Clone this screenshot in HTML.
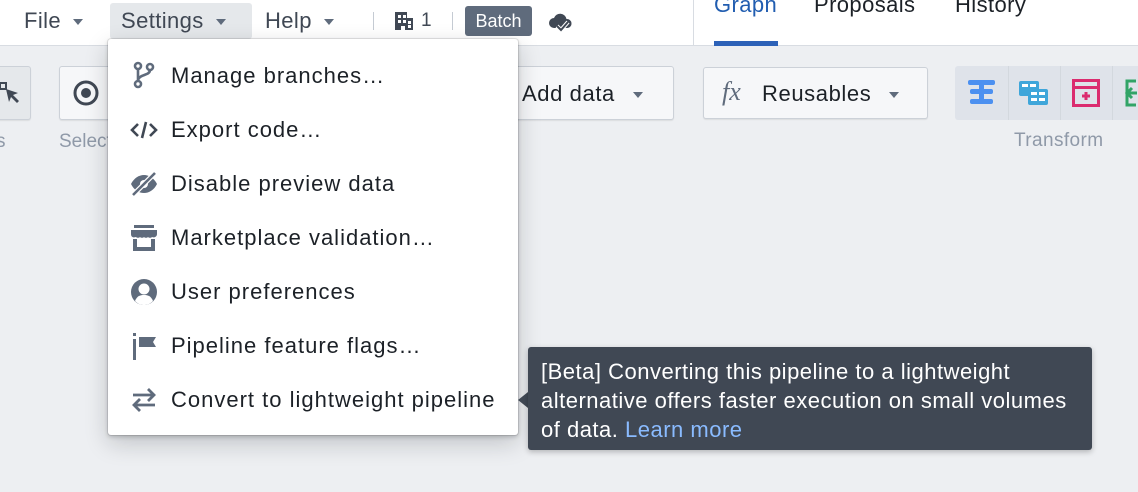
<!DOCTYPE html>
<html><head><meta charset="utf-8"><style>
*{box-sizing:border-box;margin:0;padding:0}
body{width:1138px;height:492px;overflow:hidden;background:#edeff2;font-family:"Liberation Sans",sans-serif;color:#1c2127;position:relative}
.top{position:absolute;left:0;top:0;width:1138px;height:46px;background:#fff;border-bottom:1px solid #d8dce2}
.ab{position:absolute}
.mi{position:absolute;font-size:22px;letter-spacing:.4px;color:#404854;top:8px}
.caret{display:inline-block;width:0;height:0;border-left:5px solid transparent;border-right:5px solid transparent;border-top:6px solid #5f6b7c;vertical-align:middle;margin-left:12px}
.btn{position:absolute;background:#f6f7f9;border:1px solid #ccd1d8;border-radius:3px;box-shadow:0 1px 1px rgba(0,0,0,.08)}
.menu{position:absolute;left:108px;top:39px;width:410px;height:396px;background:#fff;border-radius:3px;box-shadow:0 0 0 1px rgba(17,20,24,.1),0 2px 4px rgba(17,20,24,.2),0 8px 24px rgba(17,20,24,.2)}
.it{position:absolute;left:63px;font-size:22px;letter-spacing:1px;color:#1c2127;white-space:nowrap}
.ic{position:absolute;left:22px;width:28px;height:28px}
.tip{position:absolute;left:528px;top:347px;width:564px;height:103px;background:#404854;border-radius:3px;color:#fff;font-size:22px;letter-spacing:.5px;line-height:29px;padding:10px 13px;white-space:nowrap;box-shadow:0 2px 6px rgba(0,0,0,.25)}
</style></head><body>
<div class="top"></div>
<div class="mi" style="left:24px">File<span class="caret"></span></div>
<div class="ab" style="left:110px;top:3px;width:142px;height:36px;background:#e5e8eb;border-radius:3px"></div>
<div class="mi" style="left:121px">Settings<span class="caret"></span></div>
<div class="mi" style="left:265px">Help<span class="caret"></span></div>
<div class="ab" style="left:373px;top:12px;width:1px;height:18px;background:#c5cbd3"></div>
<svg class="ab" style="left:393px;top:10px" width="22" height="22" viewBox="0 0 22 22"><path fill="#404854" d="M2 2h12v6h6v12H2z"/><g fill="#fff"><rect x="5" y="5" width="3" height="3"/><rect x="10" y="5" width="3" height="3"/><rect x="5" y="10" width="3" height="3"/><rect x="10" y="10" width="3" height="3"/><rect x="15" y="11" width="3" height="3"/><rect x="15" y="15" width="3" height="3"/><rect x="8" y="16" width="4" height="4"/></g></svg>
<div class="mi" style="left:421px;font-size:19px;top:10px">1</div>
<div class="ab" style="left:452px;top:12px;width:1px;height:18px;background:#c5cbd3"></div>
<div class="ab" style="left:465px;top:6px;width:67px;height:30px;background:#5f6b7c;border-radius:3px;color:#fff;font-size:18px;line-height:30px;text-align:center">Batch</div>
<svg class="ab" style="left:549px;top:10px" width="24" height="26" viewBox="0 0 24 26"><path fill="#404854" d="M5 18a5 5 0 0 1 0-10 6.5 6.5 0 0 1 12.5 1 4.5 4.5 0 0 1 1 9z"/><path d="M8 16l4 4 7-8" stroke="#fff" stroke-width="4" fill="none"/><path d="M8 16l4 4 7-8" stroke="#404854" stroke-width="2" fill="none"/></svg>
<div class="ab" style="left:693px;top:0;width:1px;height:46px;background:#d8dce2"></div>
<div class="ab" style="left:714px;top:-8px;font-size:22px;letter-spacing:.4px;color:#215db0">Graph</div>
<div class="ab" style="left:714px;top:41px;width:64px;height:5px;background:#2d62b8"></div>
<div class="ab" style="left:814px;top:-8px;font-size:22px;letter-spacing:.4px">Proposals</div>
<div class="ab" style="left:955px;top:-8px;font-size:22px;letter-spacing:.4px">History</div>

<div class="btn" style="left:-10px;top:66px;width:41px;height:54px;background:#e5e8eb"></div>
<svg class="ab" style="left:0;top:80px" width="22" height="26" viewBox="0 0 22 26"><rect x="0" y="3" width="6" height="6" fill="none" stroke="#404854" stroke-width="2"/><path d="M6 9l12 4-5 2 6 6-2 2-6-6-2 5z" fill="#404854"/></svg>
<div class="ab" style="left:-4px;top:131px;font-size:19px;color:#8f99a8">s</div>
<div class="btn" style="left:59px;top:66px;width:60px;height:54px"></div>
<svg class="ab" style="left:72px;top:79px" width="28" height="28"><circle cx="14" cy="14" r="11" fill="none" stroke="#404854" stroke-width="3"/><circle cx="14" cy="14" r="5" fill="#404854"/></svg>
<div class="ab" style="left:59px;top:131px;font-size:19px;color:#8f99a8">Select</div>
<div class="btn" style="left:480px;top:66px;width:194px;height:54px"></div>
<div class="ab" style="left:522px;top:81px;font-size:22px;letter-spacing:.6px">Add data<span class="caret" style="margin-left:18px"></span></div>
<div class="btn" style="left:703px;top:67px;width:225px;height:52px"></div>
<div class="ab" style="left:722px;top:77px;font-size:26px;font-style:italic;font-family:'Liberation Serif',serif;color:#5f6b7c">fx</div>
<div class="ab" style="left:762px;top:81px;font-size:22px;letter-spacing:.6px">Reusables<span class="caret" style="margin-left:18px"></span></div>
<div class="ab" style="left:955px;top:66px;width:190px;height:54px;background:#dfe3ea;border-radius:3px"></div>
<div class="ab" style="left:1008px;top:66px;width:1px;height:54px;background:#d3d8de"></div>
<div class="ab" style="left:1060px;top:66px;width:1px;height:54px;background:#d3d8de"></div>
<div class="ab" style="left:1112px;top:66px;width:1px;height:54px;background:#d3d8de"></div>
<svg class="ab" style="left:967px;top:79px" width="30" height="28"><g fill="#4c90f0"><rect x="1" y="1" width="27" height="5" rx="2"/><rect x="3" y="10" width="23" height="5" rx="2"/><rect x="3" y="20" width="23" height="5" rx="2"/><rect x="12" y="4" width="5" height="18"/></g></svg>
<svg class="ab" style="left:1019px;top:80px" width="30" height="26"><g fill="#3fa6da"><rect x="0" y="1" width="20" height="15" rx="2"/><rect x="9" y="9" width="20" height="16" rx="2"/></g><g fill="#fff"><rect x="3" y="4" width="6" height="3"/><rect x="11" y="4" width="6" height="3"/><rect x="12" y="12" width="6" height="3"/><rect x="20" y="12" width="6" height="3"/><rect x="12" y="18" width="6" height="3"/><rect x="20" y="18" width="6" height="3"/></g></svg>
<svg class="ab" style="left:1072px;top:79px" width="28" height="28"><rect x="1.5" y="1.5" width="25" height="25" fill="none" stroke="#db2c6f" stroke-width="3"/><rect x="1" y="7" width="26" height="3" fill="#db2c6f"/><path d="M14 13v8M10 17h8" stroke="#db2c6f" stroke-width="3"/></svg>
<svg class="ab" style="left:1124px;top:79px" width="14" height="28"><path d="M12 2H3v24h9M3 14h10M8 9l-5 5 5 5" stroke="#32a467" stroke-width="3" fill="none"/></svg>
<div class="ab" style="left:1014px;top:130px;font-size:19px;letter-spacing:.4px;color:#8f99a8">Transform</div>

<div class="menu">
<svg class="ic" style="top:22px" viewBox="0 0 28 28"><g fill="none" stroke="#5f6b7c" stroke-width="2.6"><circle cx="8" cy="5" r="3"/><circle cx="8" cy="23" r="3"/><circle cx="20" cy="6" r="3"/><path d="M8 8v12M20 9c0 6-12 4-12 11"/></g></svg>
<div class="it" style="top:24px">Manage branches…</div>
<svg class="ic" style="top:77px" viewBox="0 0 28 28"><path d="M8 8l-6 6 6 6M20 8l6 6-6 6M16 6l-4 16" fill="none" stroke="#404854" stroke-width="2.6"/></svg>
<div class="it" style="top:78px">Export code…</div>
<svg class="ic" style="top:131px" viewBox="0 0 28 28"><path d="M1 14c3-6 8-9 13-9s10 3 13 9c-3 6-8 9-13 9S4 20 1 14z" fill="#5f6b7c"/><circle cx="14" cy="14" r="4" fill="#fff"/><path d="M3 25L25 3" stroke="#fff" stroke-width="5"/><path d="M3 25L25 3" stroke="#5f6b7c" stroke-width="2.6"/></svg>
<div class="it" style="top:132px">Disable preview data</div>
<svg class="ic" style="top:185px" viewBox="0 0 28 28"><path fill="#5f6b7c" d="M4 1h20v3H4zM1 6h26v4c0 3-3 4-5 3-1 1-3 1-4 0-1 1-3 1-4 0-1 1-3 1-4 0-1 1-3 1-4 0-3 1-5 0-5-3zM3 15h4v8h14v-8h4v12H3z"/></svg>
<div class="it" style="top:186px">Marketplace validation…</div>
<svg class="ic" style="top:239px" viewBox="0 0 28 28"><circle cx="14" cy="14" r="13" fill="#5f6b7c"/><circle cx="14" cy="11" r="5.5" fill="#fff"/><path d="M5 23c2-5 5-6 9-6s7 1 9 6a12 12 0 0 1-18 0z" fill="#fff"/></svg>
<div class="it" style="top:240px">User preferences</div>
<svg class="ic" style="top:293px" viewBox="0 0 28 28"><rect x="3" y="1" width="3" height="3" fill="#5f6b7c"/><rect x="3" y="7" width="3" height="21" fill="#5f6b7c"/><path d="M9 5h17l-3 5 3 5H9z" fill="#5f6b7c"/></svg>
<div class="it" style="top:294px">Pipeline feature flags…</div>
<svg class="ic" style="top:347px" viewBox="0 0 28 28"><path d="M3 9h21M18 3l6 6-6 6M25 19H4M10 13l-6 6 6 6" fill="none" stroke="#5f6b7c" stroke-width="2.8"/></svg>
<div class="it" style="top:348px">Convert to lightweight pipeline</div>
</div>
<div class="ab" style="left:518px;top:392px;width:0;height:0;border-top:8px solid transparent;border-bottom:8px solid transparent;border-right:10px solid #404854"></div>
<div class="tip">[Beta] Converting this pipeline to a lightweight<br>alternative offers faster execution on small volumes<br>of data. <span style="color:#8abbff">Learn more</span></div>
</body></html>
